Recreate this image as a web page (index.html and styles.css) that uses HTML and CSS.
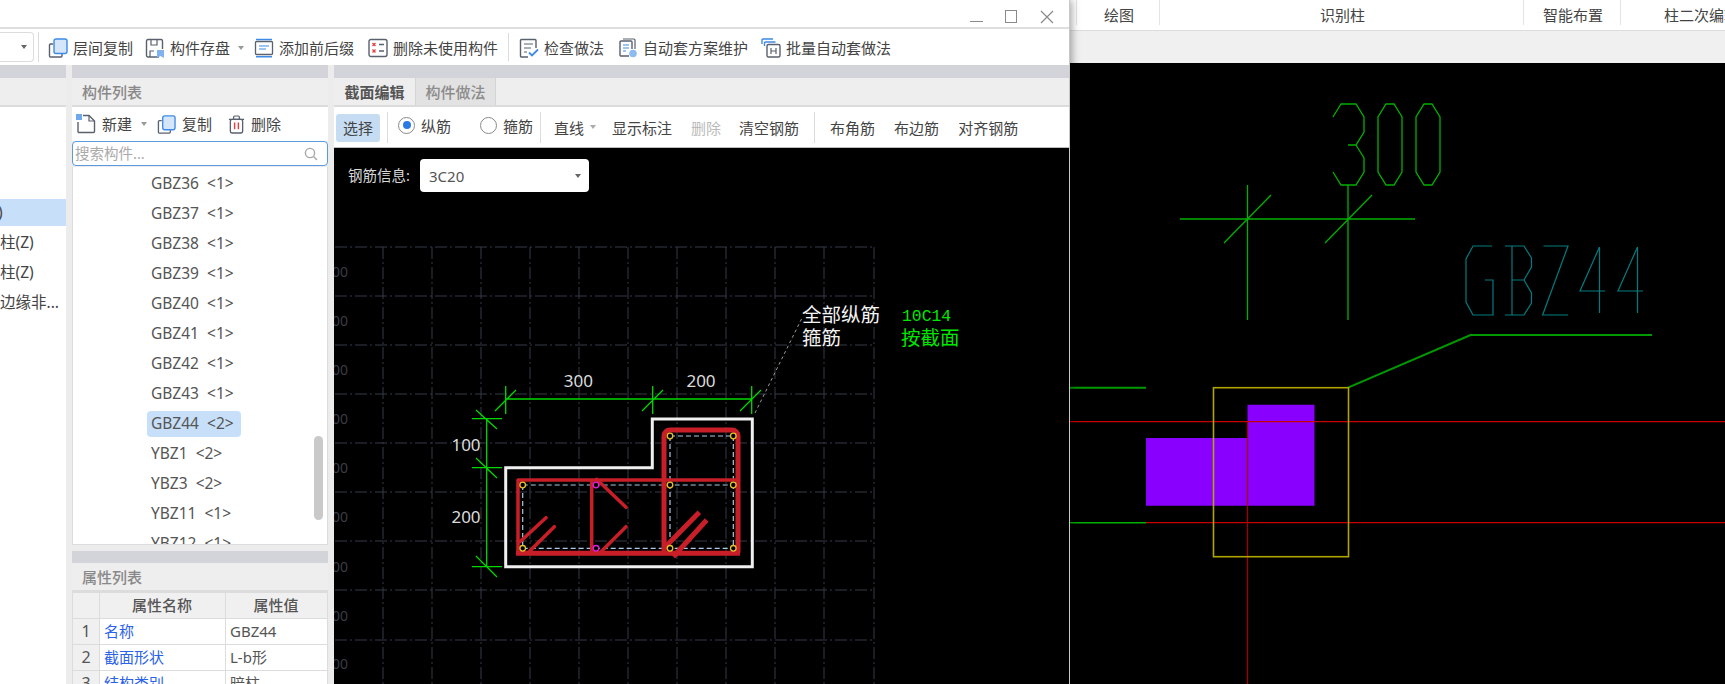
FILE: index.html
```html
<!DOCTYPE html>
<html lang="zh-CN">
<head>
<meta charset="utf-8">
<title>截面编辑</title>
<link rel="stylesheet" href="styles.css">
</head>
<body>
<svg class="defs" width="0" height="0" aria-hidden="true">
  <symbol id="i-copy" viewBox="0 0 20 20">
    <path d="M5 6H2.5a1 1 0 0 0-1 1v11a1 1 0 0 0 1 1H13a1 1 0 0 0 1-1v-2" fill="none" stroke="#59606e" stroke-width="1.4"/>
    <rect x="6" y="1" width="13" height="14.5" rx="2" fill="#d5e5fa" stroke="#3d8be6" stroke-width="1.4"/>
  </symbol>
</svg>
<div class="app">
  <section class="dialog">
    <header class="titlebar">
      <span class="win win-min"></span>
      <span class="win win-max"></span>
      <svg class="win-close" width="14" height="14" viewBox="0 0 14 14"><path d="M1 1l12 12M13 1L1 13" stroke="#8a8a8a" stroke-width="1.2" fill="none"/></svg>
    </header>
    <nav class="toolbar">
      <div class="combo"><i class="caret"></i></div>
      <span class="vline vline-a"></span>
      <div class="tool"><svg class="ico"><use href="#i-copy"/></svg><span>层间复制</span></div>
      <div class="tool ml12"><svg class="ico" viewBox="0 0 20 20"><path d="M14 19H3a1.500 1.500 0 0 1-1.500-1.500V3A1.500 1.500 0 0 1 3 1.500h13A1.500 1.500 0 0 1 17.500 3v8" fill="none" stroke="#59606e" stroke-width="1.400"/><path d="M6 2v5h6V2M5 19v-6h4" fill="none" stroke="#59606e" stroke-width="1.200"/><path d="M12 12h7v8l-3.500-2-3.500 2z" fill="#7fb2ee"/></svg><span>构件存盘</span></div>
      <i class="caret caret-a"></i>
      <div class="tool ml10"><svg class="ico" viewBox="0 0 20 20"><rect x="1.500" y="3.500" width="17" height="13" rx="1" fill="none" stroke="#59606e" stroke-width="1.300"/><path d="M2 1.500h16M2 18.700h16" stroke="#3d8be6" stroke-width="1.600"/><path d="M5 8h10M5 11h7" stroke="#3d8be6" stroke-width="1.200"/></svg><span>添加前后缀</span></div>
      <div class="tool ml14"><svg class="ico" viewBox="0 0 20 20"><rect x="1" y="1.500" width="18" height="17" rx="2" fill="none" stroke="#59606e" stroke-width="1.400"/><path d="M4.500 5l3 3M7.500 5l-3 3M4.500 11.500l3 3M7.500 11.500l-3 3" stroke="#e0413f" stroke-width="1.300"/><path d="M11 6.500h5M11 13h5" stroke="#59606e" stroke-width="1.300"/></svg><span>删除未使用构件</span></div>
      <span class="vline vline-b"></span>
      <div class="tool ml10"><svg class="ico" viewBox="0 0 20 20"><path d="M9 19H2.500a1 1 0 0 1-1-1V2.500a1 1 0 0 1 1-1H16a1 1 0 0 1 1 1V10" fill="none" stroke="#59606e" stroke-width="1.400"/><path d="M5 6h9M5 10h7M5 14h3" stroke="#59606e" stroke-width="1.200"/><path d="M10 14.500l3 3 6-6" fill="none" stroke="#3d8be6" stroke-width="1.800"/></svg><span>检查做法</span></div>
      <div class="tool ml14"><svg class="ico" viewBox="0 0 20 20"><path d="M5 1h11a1 1 0 0 1 1 1v9" fill="none" stroke="#59606e" stroke-width="1.200"/><path d="M11 18H3a1 1 0 0 1-1-1V4a1 1 0 0 1 1-1h10a1 1 0 0 1 1 1v7" fill="none" stroke="#59606e" stroke-width="1.400"/><path d="M5 7h6M5 10h6M5 13h3" stroke="#3d8be6" stroke-width="1.200"/><circle cx="15" cy="15.500" r="3.800" fill="#8dbcf2"/></svg><span>自动套方案维护</span></div>
      <div class="tool ml13"><svg class="ico" viewBox="0 0 20 20"><path d="M1 6V2a1 1 0 0 1 1-1h10M3.500 8V5a1 1 0 0 1 1-1h10" fill="none" stroke="#3d8be6" stroke-width="1.400"/><rect x="6" y="6.500" width="13" height="12.500" rx="1.500" fill="none" stroke="#59606e" stroke-width="1.400"/><path d="M10 10v6M15 10v6M10 13h5" stroke="#59606e" stroke-width="1.200"/></svg><span>批量自动套做法</span></div>
    </nav>
    <div class="panes">
      <aside class="tree">
        <div class="band"></div>
        <div class="pane-head"></div>
        <div class="tree-rows">
          <div class="tree-row tree-sel"><span class="cut">)</span></div>
          <div class="tree-row">柱(Z)</div>
          <div class="tree-row">柱(Z)</div>
          <div class="tree-row">边缘非...</div>
        </div>
      </aside>
      <div class="sep"></div>
      <div class="mid">
        <div class="band"></div>
        <div class="pane-head pane-title">构件列表</div>
        <div class="list-tools">
          <div class="ltool"><svg class="ico" viewBox="0 0 20 20"><path d="M7 1.500h6l5.500 5.500v10.500a1 1 0 0 1-1 1H3a1 1 0 0 1-1-1V8" fill="none" stroke="#59606e" stroke-width="1.400"/><path d="M13 1.500V7h5.500" fill="none" stroke="#59606e" stroke-width="1.200"/><rect x="0" y="0" width="6" height="6" fill="#6fa8ec"/></svg><span>新建</span></div>
          <i class="caret caret-b"></i>
          <div class="ltool ml10"><svg class="ico ico-s"><use href="#i-copy"/></svg><span>复制</span></div>
          <div class="ltool ml16"><svg class="ico ico-t" viewBox="0 0 18 20"><path d="M1 4.500h16M6 4.500V2a1 1 0 0 1 1-1h4a1 1 0 0 1 1 1v2.500" fill="none" stroke="#59606e" stroke-width="1.300"/><rect x="2.500" y="4.500" width="13" height="14.500" rx="2" fill="none" stroke="#59606e" stroke-width="1.400"/><path d="M7 8v7M11 8v7" stroke="#e0413f" stroke-width="1.500"/></svg><span>删除</span></div>
        </div>
        <div class="search">
          <span>搜索构件...</span>
          <svg width="14" height="14" viewBox="0 0 14 14"><circle cx="6" cy="6" r="4.600" fill="none" stroke="#a8a8a8" stroke-width="1.400"/><path d="M9.500 9.500l3.500 3.500" stroke="#a8a8a8" stroke-width="1.400"/></svg>
        </div>
        <div class="list">
          <div class="item"><span>GBZ36&nbsp; &lt;1&gt;</span></div>
          <div class="item"><span>GBZ37&nbsp; &lt;1&gt;</span></div>
          <div class="item"><span>GBZ38&nbsp; &lt;1&gt;</span></div>
          <div class="item"><span>GBZ39&nbsp; &lt;1&gt;</span></div>
          <div class="item"><span>GBZ40&nbsp; &lt;1&gt;</span></div>
          <div class="item"><span>GBZ41&nbsp; &lt;1&gt;</span></div>
          <div class="item"><span>GBZ42&nbsp; &lt;1&gt;</span></div>
          <div class="item"><span>GBZ43&nbsp; &lt;1&gt;</span></div>
          <div class="item item-sel"><span>GBZ44&nbsp; &lt;2&gt;</span></div>
          <div class="item"><span>YBZ1&nbsp; &lt;2&gt;</span></div>
          <div class="item"><span>YBZ3&nbsp; &lt;2&gt;</span></div>
          <div class="item"><span>YBZ11&nbsp; &lt;1&gt;</span></div>
          <div class="item"><span>YBZ12&nbsp; &lt;1&gt;</span></div>
          <div class="scrollbar"></div>
        </div>
        <div class="band band-low"></div>
        <div class="pane-head pane-title">属性列表</div>
        <table class="props">
          <colgroup><col class="c-idx"><col class="c-name"><col class="c-val"></colgroup>
          <thead><tr><th></th><th>属性名称</th><th>属性值</th></tr></thead>
          <tbody>
            <tr><td class="idx">1</td><td class="name">名称</td><td>GBZ44</td></tr>
            <tr><td class="idx">2</td><td class="name">截面形状</td><td>L-b形</td></tr>
            <tr><td class="idx">3</td><td class="name">结构类别</td><td>暗柱</td></tr>
          </tbody>
        </table>
      </div>
      <div class="sep"></div>
      <main class="editor">
        <div class="band"></div>
        <div class="tabs">
          <div class="tab tab-on">截面编辑</div>
          <div class="tab tab-off">构件做法</div>
        </div>
        <div class="edit-tools">
          <button class="btn-sel">选择</button>
          <span class="vline vline-c"></span>
          <span class="radio radio-on"></span><span class="rlabel">纵筋</span>
          <span class="radio radio-2"></span><span class="rlabel">箍筋</span>
          <span class="vline vline-d"></span>
          <span class="et et-line">直线</span><i class="caret caret-c"></i>
          <span class="et et-show">显示标注</span>
          <span class="et et-del">删除</span>
          <span class="et et-clear">清空钢筋</span>
          <span class="vline vline-e"></span>
          <span class="et et-a">布角筋</span>
          <span class="et et-b">布边筋</span>
          <span class="et et-b">对齐钢筋</span>
        </div>
        <div class="canvas">
          <svg class="drawing" width="735" height="536" viewBox="334 148 735 536">
            <g class="grid">
              <path d="M335 247H874M335 296H874M335 345H874M335 394H874M335 443H874M335 492H874M335 541H874M335 590H874M335 640H874"/>
              <path d="M383 247V684M432 247V684M481 247V684M530 247V684M579 247V684M628 247V684M677 247V684M726 247V684M775 247V684M824 247V684M874 247V684"/>
            </g>
            <g class="ruler">
              <text x="348" y="277">100</text><text x="348" y="326">100</text><text x="348" y="375">100</text>
              <text x="348" y="424">100</text><text x="348" y="473">100</text><text x="348" y="522">100</text>
              <text x="348" y="572">100</text><text x="348" y="621">100</text><text x="348" y="669">100</text>
            </g>
            <path class="leader" d="M755 413L802 318"/>
            <path class="outline" d="M505.700 467.700H652.300V419H752.300V566.700H505.700Z"/>
            <g class="dim">
              <path d="M505.700 399H751.700M505.700 386V414M652.700 386V414M751.700 386V414M495 411L516 390M642 411L663 390M740 411L761 390"/>
              <path d="M486.700 418.700V566.700M472 418.700H502M472 467.700H502M472 566.700H502M476 410L497 429M476 458L497 478M476 556L497 577"/>
            </g>
            <g class="stir-dash">
              <path d="M522.700 485H733.300M522.700 548.300H733.300M670 436H733.300M522.700 485V548.300M670 436V548.300M733.300 436V548.300"/>
            </g>
            <g class="bar">
              <path d="M518 480H738M518 480V553M591.700 480V553"/>
              <path d="M520 541.700L546 517.700M528 552.700L554.300 526.700M596.700 479.300L626 507.300M600 552.700L626 526.700"/>
            </g>
            <g class="bar bar-thick">
              <path d="M516 553.300H740"/>
              <path d="M664 553V436a6 6 0 0 1 6-6h62a6 6 0 0 1 6 6V553"/>
              <path d="M664 548.300L699.300 512.300M673.300 556.700L706.700 520"/>
            </g>
            <g class="dot">
              <circle cx="522.700" cy="485" r="2.800"/><circle cx="522.700" cy="548.300" r="2.800"/>
              <circle cx="670" cy="436" r="2.800"/><circle cx="733.300" cy="436" r="2.800"/>
              <circle cx="670" cy="485" r="2.800"/><circle cx="733.300" cy="485" r="2.800"/>
              <circle cx="670" cy="548.300" r="2.800"/><circle cx="733.300" cy="548.300" r="2.800"/>
            </g>
            <g class="dot dot-m">
              <circle cx="596" cy="485" r="2.800"/><circle cx="596" cy="548.300" r="2.800"/>
            </g>
            <g class="dim-text">
              <text x="578.300" y="387">300</text><text x="701" y="387">200</text>
              <text x="466" y="451">100</text><text x="466" y="523">200</text>
            </g>
            <text class="note" x="802" y="322">全部纵筋</text>
            <text class="note" x="802" y="345">箍筋</text>
            <text class="note-code" x="902" y="321">10C14</text>
            <text class="note note-g" x="901" y="345">按截面</text>
          </svg>
          <div class="rebar-info">
            <label>钢筋信息:</label>
            <div class="rebar-select"><span>3C20</span><i class="caret"></i></div>
          </div>
        </div>
      </main>
    </div>
    <div class="edge"></div>
  </section>
  <section class="back">
    <div class="ribbon">
      <div class="rib-cell rib-lead"></div>
      <div class="rib-cell">绘图</div>
      <div class="rib-cell">识别柱</div>
      <div class="rib-cell">智能布置</div>
      <div class="rib-cell rib-last">柱二次编辑</div>
    </div>
    <div class="strip"></div>
    <svg class="cad" width="655" height="621" viewBox="1070 63 655 621">
      <g class="cad-green">
        <path d="M1333 117L1341 104H1356L1364 117V132L1356 145H1348M1356 145L1364 158V172L1356 185H1341L1333 172"/>
        <path d="M1386 104H1394L1402 117V172L1394 185H1386L1378 172V117Z"/>
        <path d="M1424 104H1432L1440 117V172L1432 185H1424L1416 172V117Z"/>
        <path d="M1180 219H1415M1247.500 185V320M1348 185V320M1224 243L1271 195M1325 243L1372 195"/>
      </g>
      <g class="cad-teal">
        <path d="M1492 246H1473L1466 259V302L1473 315H1493V280H1485"/>
        <path d="M1505 246H1524L1531.500 258V267L1524 280H1512M1524 280L1531.500 293V303L1524 315H1505M1512 246V315"/>
        <path d="M1543.500 246H1568L1542.600 315H1568"/>
        <path d="M1599.500 247L1580 291H1605M1599.500 247V313"/>
        <path d="M1637.500 247L1618 291H1643M1637.500 247V313"/>
      </g>
      <path class="cad-lead" d="M1348 387.700L1470.500 335H1652"/>
      <path class="cad-lead" d="M1070 387.700H1146"/>
      <path class="cad-solid" d="M1247.500 404.700H1314.500V505.700H1146V438H1247.500Z"/>
      <path class="cad-red" d="M1070 421.700H1725M1146 522.700H1725"/>
      <path class="cad-red cad-red-d" d="M1247.500 421.700V684"/>
      <path class="cad-gline" d="M1070 522.700H1146"/>
      <rect class="cad-box" x="1213.500" y="387.700" width="135" height="169"/>
    </svg>
  </section>
</div>
</body>
</html>
```

FILE: styles.css
```css
* { box-sizing: border-box; }
html, body { margin: 0; padding: 0; }
body {
  width: 1725px;
  height: 684px;
  overflow: hidden;
  background: #000;
  font: 15px/1.2 "Noto Sans", "Noto Sans CJK SC", sans-serif;
  color: #444;
}
.defs { position: absolute; }
.app { display: flex; width: 1725px; height: 684px; overflow: hidden; }

/* front dialog */
.dialog {
  position: relative;
  z-index: 2;
  width: 1070px;
  height: 684px;
  flex: none;
  display: flex;
  flex-direction: column;
  background: #fff;
  box-shadow: 2px 0 8px rgba(0, 0, 0, .35);
}
.edge { position: absolute; top: 0; right: 0; bottom: 0; width: 1px; background: #c8c8c8; }
.titlebar {
  height: 29px;
  flex: none;
  display: flex;
  justify-content: flex-end;
  align-items: flex-start;
  padding-right: 16px;
  border-bottom: 2px solid #dedede;
}
.win { display: block; }
.win-min { width: 13px; height: 1px; margin-top: 21px; background: #8a8a8a; }
.win-max { width: 12px; height: 13px; margin: 10px 0 0 22px; border: 1px solid #8a8a8a; }
.win-close { margin: 10px 0 0 23px; }

.toolbar {
  height: 36px;
  flex: none;
  display: flex;
  align-items: center;
  padding-top: 2px;
  background: #fff;
  white-space: nowrap;
}
.combo {
  width: 34px;
  height: 30px;
  flex: none;
  margin-top: -2px;
  display: flex;
  align-items: center;
  justify-content: flex-end;
  padding-right: 6px;
  border: 1px solid #dcdcdc;
  border-left: 0;
  border-radius: 0 4px 4px 0;
}
.caret {
  display: block;
  width: 0;
  height: 0;
  flex: none;
  border-left: 3.500px solid transparent;
  border-right: 3.500px solid transparent;
  border-top: 4px solid #666;
}
.vline { display: block; width: 1px; flex: none; background: #dcdcdc; }
.vline-a { height: 30px; margin: -2px 9px 0 4px; }
.vline-b { height: 28px; margin: -2px 0 0 10px; }
.tool, .ltool { display: flex; align-items: center; flex: none; }
.ico { width: 20px; height: 20px; flex: none; margin-right: 5px; }
.ico-s { width: 19px; height: 19px; margin-right: 6px; }
.ico-t { width: 17px; height: 19px; margin-right: 7px; }
.ml10 { margin-left: 10px; }
.ml12 { margin-left: 12px; }
.ml13 { margin-left: 13px; }
.ml14 { margin-left: 14px; }
.ml16 { margin-left: 16px; }
.caret-a { margin-left: 8px; border-top-color: #999; }
.caret-b { margin-left: 9px; border-top-color: #999; }

.panes { flex: 1; display: flex; min-height: 0; }
.sep { width: 6px; flex: none; background: #ececec; }
.band { height: 13px; flex: none; background: #d2d4d9; }
.band-low { height: 12px; margin-top: 6px; }
.pane-head {
  height: 29px;
  flex: none;
  background: #eeeeee;
  border-bottom: 2px solid #dcdcdc;
}
.pane-title {
  display: flex;
  align-items: center;
  padding-left: 10px;
  color: #888;
  font-weight: 500;
}

.tree { width: 66px; flex: none; display: flex; flex-direction: column; background: #fff; overflow: hidden; }
.tree-rows { padding-top: 92px; }
.tree-row { height: 30px; display: flex; align-items: center; padding-bottom: 3px; white-space: nowrap; font-size: 15.500px; color: #444; }
.tree-sel { height: 27px; margin-bottom: 3px; padding-bottom: 0; background: #c7dff8; }
.cut { margin-left: -2px; }

.mid { width: 256px; flex: none; display: flex; flex-direction: column; background: #ececec; }
.list-tools { height: 34px; flex: none; display: flex; align-items: center; padding-left: 4px; background: #fff; }
.list-tools .ico { margin-right: 6px; }
.search {
  height: 25px;
  flex: none;
  display: flex;
  align-items: center;
  justify-content: space-between;
  padding: 0 9px 0 2px;
  margin-bottom: 1px;
  background: #fff;
  border: 1.500px solid #5a9be0;
  border-radius: 4px;
  color: #aaa;
  font-size: 14.500px;
}
.list {
  position: relative;
  height: 378px;
  flex: none;
  padding-top: 2px;
  overflow: hidden;
  background: #fff;
  border: 1px solid #dcdcdc;
  border-top: 0;
}
.item { height: 30px; display: flex; align-items: center; padding-left: 74px; white-space: nowrap; color: #555; font-size: 15.500px; }
.item span { padding: 3px 7px 4px 4px; border-radius: 4px; }
.item-sel span { background: #c7dff8; }
.scrollbar {
  position: absolute;
  top: 269px;
  left: 241px;
  width: 9px;
  height: 84px;
  border-radius: 5px;
  background: #c9c9c9;
}
.props { width: 256px; border-collapse: collapse; table-layout: fixed; background: #fff; font-size: 15px; }
.c-idx { width: 27px; }
.c-name { width: 126px; }
.props th, .props td { height: 26px; padding: 0 5px 2px 4px; border: 1px solid #dcdcdc; white-space: nowrap; overflow: hidden; color: #555; }
.props th { background: #f0f0f0; font-weight: 500; text-align: center; }
.props td.idx { background: #f0f0f0; text-align: center; padding: 0; font-size: 16px; }
.props td.name { color: #2a62e8; }

.editor { width: 735px; flex: none; display: flex; flex-direction: column; min-height: 0; }
.tabs { height: 29px; flex: none; display: flex; background: #eee; border-bottom: 2px solid #dcdcdc; }
.tab { width: 81px; display: flex; align-items: center; justify-content: center; }
.tab-on { font-weight: 700; color: #555; }
.tab-off { background: #e2e2e2; color: #8c8c8c; font-weight: 500; border-left: 1px solid #d4d4d4; border-right: 1px solid #d4d4d4; }
.edit-tools {
  height: 41px;
  flex: none;
  display: flex;
  align-items: center;
  white-space: nowrap;
  background: #fff;
  border-bottom: 1px solid #bbb;
}
.btn-sel {
  width: 44px;
  height: 28px;
  margin: 2px 0 0 2px;
  padding: 0;
  border: 0;
  border-radius: 3px;
  font: inherit;
  color: #444;
  background: #c5dcf3;
}
.vline-c { height: 31px; margin-left: 7px; }
.vline-d { height: 31px; margin-left: 7px; }
.vline-e { height: 31px; margin-left: 15px; }
.radio {
  position: relative;
  width: 17px;
  height: 17px;
  flex: none;
  margin: -4px 0 0 10px;
  background: #fff;
  border: 1px solid #8a8a8a;
  border-radius: 50%;
}
.radio-2 { margin-left: 29px; }
.radio-on::after {
  content: "";
  position: absolute;
  top: 3.500px;
  left: 3.500px;
  width: 8px;
  height: 8px;
  border-radius: 50%;
  background: #2a7ae2;
}
.rlabel { margin: -2px 0 0 6px; }
.radio-2 + .rlabel { margin-left: 6px; }
.et { margin-top: 2px; flex: none; }
.et-line { margin-left: 13px; }
.caret-c { margin: 0 0 0 6px; border-top-color: #aaa; }
.et-show { margin-left: 16px; }
.et-del { margin-left: 19px; color: #bbb; }
.et-clear { margin-left: 18px; }
.et-a { margin-left: 15px; }
.et-b { margin-left: 19px; }

.canvas { position: relative; flex: 1; min-height: 0; overflow: hidden; background: #000; }
.drawing { position: absolute; top: 0; left: 0; }
.rebar-info { position: relative; display: flex; align-items: center; padding: 11px 0 0 14px; }
.rebar-info label { color: #d8d8d8; font-size: 14.500px; width: 72px; flex: none; }
.rebar-select {
  width: 169px;
  height: 33px;
  display: flex;
  align-items: center;
  justify-content: space-between;
  padding: 0 8px 0 9px;
  background: #fff;
  border-radius: 4px;
  color: #555;
  font-size: 15px;
}

/* svg drawing */
.grid path { fill: none; stroke: #343a48; stroke-width: 1; stroke-dasharray: 12 3 2 3; }
.ruler text { fill: #3a3d46; font-size: 14px; text-anchor: end; }
.leader { fill: none; stroke: #9a9a9a; stroke-dasharray: 3 3; }
.outline { fill: none; stroke: #f0f0f0; stroke-width: 3; }
.dim path { fill: none; stroke: #00d800; stroke-width: 1.300; }
.stir-dash path { fill: none; stroke: #a9cbe6; stroke-width: 1.200; stroke-dasharray: 5 3; }
.bar path { fill: none; stroke: #c81e28; stroke-width: 3.500; stroke-linecap: round; }
.bar-thick path { stroke-width: 5; stroke-linecap: butt; }
.dot circle { fill: #000; stroke: #e6c030; stroke-width: 1.300; }
.dot-m circle { stroke: #e020e0; }
.dim-text text { fill: #dcdcdc; font-size: 17px; text-anchor: middle; }
.note { fill: #f4f4f4; font-size: 19.500px; font-weight: 400; }
.note-g { fill: #00e800; }
.note-code { fill: #00e800; font: 16.400px "Liberation Mono", monospace; }

/* background window */
.back { flex: 1; min-width: 0; display: flex; flex-direction: column; background: #000; }
.ribbon {
  height: 31px;
  flex: none;
  display: grid;
  grid-template-columns: 6px 83px 364px 97px 105px;
  align-items: start;
  background: #fff;
  border-bottom: 1px solid #dcdcdc;
  overflow: hidden;
}
.rib-cell {
  height: 25px;
  padding: 5px 0 0 2px;
  text-align: center;
  white-space: nowrap;
  line-height: 20px;
  border-left: 1px solid #e4e4e4;
  color: #444;
}
.rib-lead { border-left: 0; padding: 0; }
.rib-last { padding-left: 43px; text-align: left; }
.strip { height: 32px; flex: none; background: #f0f0f0; }
.cad { display: block; }
.cad-green path { fill: none; stroke: #00b000; stroke-width: 1.300; }
.cad-teal path { fill: none; stroke: #007c80; stroke-width: 1.200; }
.cad-lead { fill: none; stroke: #009a00; stroke-width: 2; }
.cad-solid { fill: #8a00ff; }
.cad-red { fill: none; stroke: #c80000; stroke-width: 1.300; }
.cad-red-d { stroke: #a00000; }
.cad-gline { fill: none; stroke: #00b000; stroke-width: 1.500; }
.cad-box { fill: none; stroke: #b0a400; stroke-width: 1.600; }
```
